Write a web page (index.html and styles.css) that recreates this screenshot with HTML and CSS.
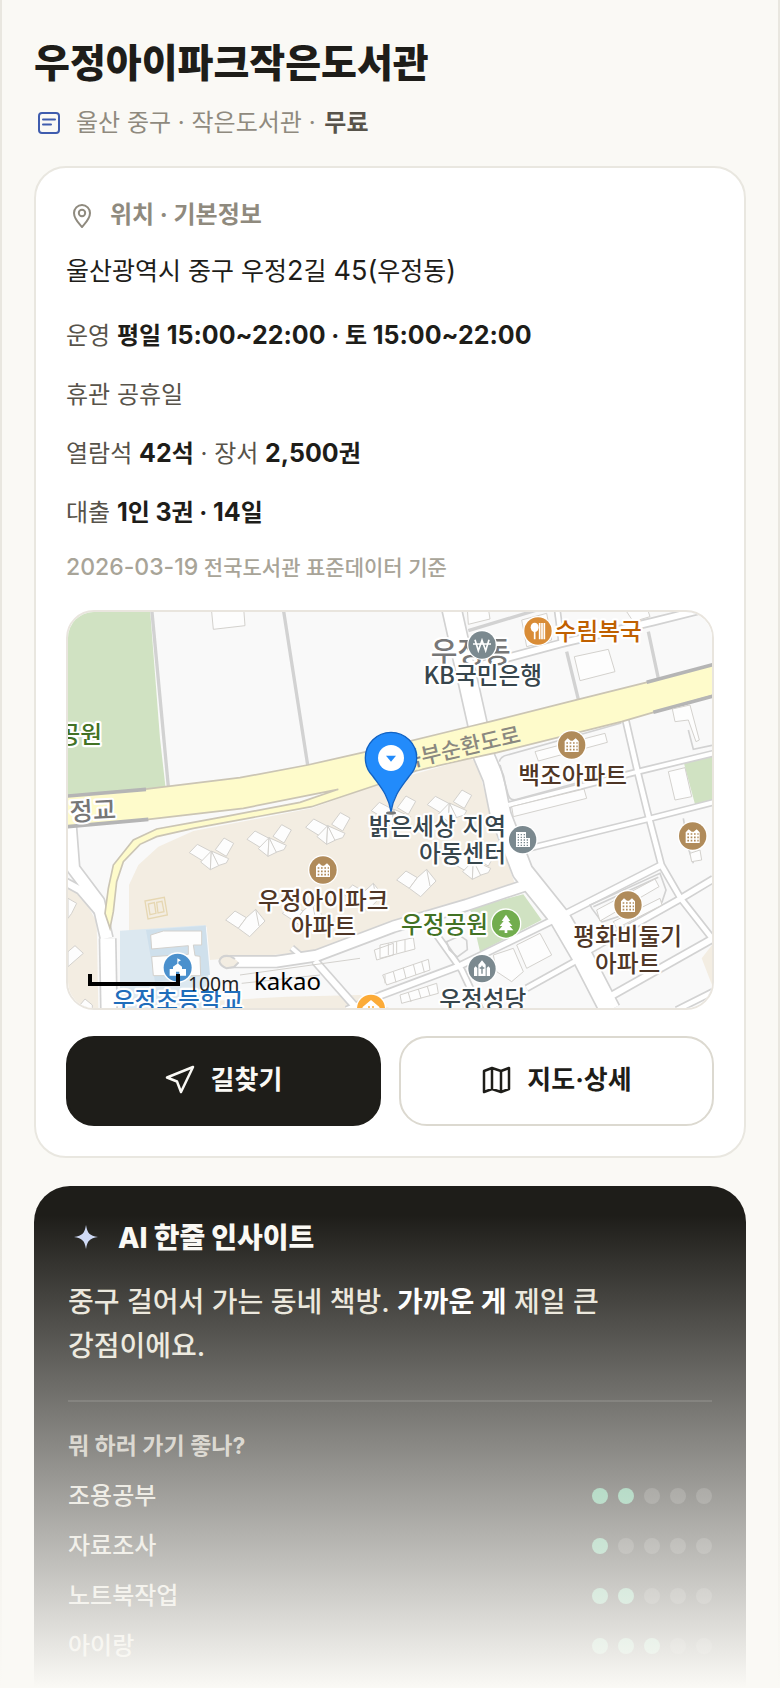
FILE: index.html
```html
<!DOCTYPE html>
<html lang="ko">
<head>
<meta charset="utf-8">
<meta name="viewport" content="width=device-width, initial-scale=1">
<title>우정아이파크작은도서관</title>
<link rel="stylesheet" href="styles.css">
</head>
<body>
<main class="page">
  <header class="head">
    <h1 class="title">우정아이파크작은도서관</h1>
    <p class="sub">
      <svg class="icon doc" viewBox="0 0 30 30" aria-hidden="true"><rect x="5" y="5" width="20" height="20" rx="3"/><path d="M9 11.500h12M9 16.500h8"/></svg>
      <span>울산 중구 · 작은도서관 · <b>무료</b></span>
    </p>
  </header>

  <section class="card">
    <h2 class="card-title">
      <svg class="icon" viewBox="0 0 30 30" aria-hidden="true"><path d="M16 27C13 23.500 8 19 8 13a8 8 0 0 1 16 0C24 19 19 23.500 16 27z"/><circle cx="16" cy="13" r="3.200"/></svg>
      위치 · 기본정보
    </h2>
    <p class="address">울산광역시 중구 우정<span class="num">2</span>길 <span class="num">45(</span>우정동<span class="num">)</span></p>
    <p class="row">운영 <b>평일 <span class="num">15:00~22:00</span> · 토 <span class="num">15:00~22:00</span></b></p>
    <p class="row">휴관 공휴일</p>
    <p class="row">열람석 <b><span class="num">42</span>석</b> · 장서 <b><span class="num">2,500</span>권</b></p>
    <p class="row">대출 <b><span class="num">1</span>인 <span class="num">3</span>권 · <span class="num">14</span>일</b></p>
    <p class="source"><span class="num">2026-03-19</span> 전국도서관 표준데이터 기준</p>

    <div class="map">
      <svg class="map-art" viewBox="24 21 1932 1188" preserveAspectRatio="xMidYMid slice" role="img" aria-label="우정아이파크작은도서관 주변 지도">
        <defs>
          <g id="apt"><path d="M-66-3-42-28 2-5-25 22z"/><path d="M38-47 67-31 45 8 12-12z"/><path d="M0-8-32 25-3 48z"/><path d="M0-8 52 15 45 28 20 36z"/><path d="M0-8 22 36-3 48z"/></g>
          <g id="block"><path d="M0 27 28 0 62 20 38 52z"/><path d="M62 20 90-5 118 30 72 77 38 52z"/><path d="M90-5 100 45"/></g>
          <g id="brown"><circle r="45" fill="#fff"/><circle r="41" fill="#b08b5a"/><path fill="#fff" d="M-21 21V-11L-12-20-3-13H3L12-20 21-11V21z"/><path stroke="#b08b5a" stroke-width="5" stroke-dasharray="5 5" d="M-16-6H18M-16 4H18M-16 14H18"/></g>
          <g id="roads">
            <path style="--w:54px" d="M1170-10 1262 400"/>
            <path style="--w:58px" d="M1262 430 1300 520 1322 630 1388 800 1500 940 1570 1060 1650 1215"/>
            <path style="--w:30px" d="M510 1070H650L770 1052 1000 965 1220 900 1400 840"/>
            <path style="--w:12px" d="M695 1028 730 1058"/>
            <path style="--w:18px" d="M765 1068 890 1210"/>
            <path style="--w:16px" d="M860 1215 960 1172 1200 1082 1480 945"/>
            <path style="--w:14px" d="M1130 990 1205 1095 1262 1215"/>
            <path style="--w:14px" d="M1697 345 1735 510 1762 620 1804 780 1862 880 1956 1000"/>
            <path style="--w:12px" d="M1345 600 1725 502 1960 445"/>
            <path style="--w:12px" d="M1400 732 1765 642 1960 592"/>
            <path style="--w:16px" d="M1510 930 1804 780"/>
            <path style="--w:16px" d="M1570 1045 1860 882 1960 822"/>
            <path style="--w:14px" d="M1400 1150 1570 1055"/>
            <path style="--w:18px" d="M1650 1175 1960 1000"/>
            <path style="--w:14px" d="M1850 1215 1960 1160"/>
            <path style="--w:18px" d="M1270 178 1500 116 1780 50 1960 5"/>
            <path style="--w:12px" d="M1490 0 1505 115"/>
            <path style="--w:34px" d="M30 660 40 790 115 890 140 1000"/>
            <path style="--w:20px" d="M10 828 60 855 115 920"/>
            <path style="--w:44px" d="M143 1000 147 1220"/>
          </g>
        </defs>
        <rect class="land" x="0" y="0" width="2000" height="1240"/>
        <path class="green" d="M0 0H269L300 400 318 560 0 580z"/>
        <path class="green" d="M1870 468 1960 446V588L1905 598z"/>
        <path class="beige" d="M955 538 755 610 400 678 295 725 235 780 207 840V980L440 965 450 1065 760 1040 1000 955 1210 885 1365 838 1290 620 1250 470 1230 460z"/>
        <path class="beige" d="M0 835 60 860 110 950 115 1210H0zM330 1195 680 1175 900 1170 990 1210H330zM1925 1060 1956 1020V1140z"/>
        <path class="school" d="M180 977 437 960 450 1210H180z"/>
        <path class="school-core" d="M258 975 437 962 450 1110 285 1130z"/>
        <path class="green" d="M1230 910 1390 868 1445 945 1260 1040z"/>
        <use href="#roads" class="road-edge"/>
        <use href="#roads" class="road-fill"/>
        <path class="loop" d="M525 1062 512 1054Q484 1048 478 1068 480 1082 500 1090L522 1086 536 1072"/>
        <path class="lane" d="M1160 1010l40-18 20 14 2 28-30 22-24-22zM1590 900l210-95 18 50-12 36-180 60-30-40zM1600 905l195-88M1885 375l15 58 56-12M1870 640l15 90 15 45M1320 480l24 88q6 22 30 14L1690 496M1318 470q4-16 24-20L1684 354"/>
        <path class="street" d="M274 0 325 545M668 0 743 480M1225 77 1480 0M1520 140 1555 283M1765 80 1795 220"/>

        <path class="avenue" d="M0 574 250 553 540 518 743 480 920 440 1235 363 1290 350 1555 283 1760 232 1970 176V268L1780 322 1685 350 1310 443 1230 460 1070 497 950 540 755 605 400 670 290 695 240 718 190 770 170 830 160 920 150 970 135 925 145 850 160 780 220 705 290 672 400 652 510 632 720 592 835 553 550 610 265 643 0 667z"/>
        <path class="bridge" d="M0 575 258 553M0 667 265 643M1760 232 1970 176M1780 322 1970 270"/>

        <g class="house">
          <path d="M454 10 460 73 555 62 551 10z"/>
          <path d="M1543 155 1645 133 1665 200 1560 227zM1425 440 1635 385 1642 412 1435 468zM1355 605 1572 552 1580 580 1360 635zM1825 500 1875 488 1895 575 1845 585zM1837 312 1890 300 1918 405 1908 410 1885 345 1845 350zM1385 45 1460 25 1475 105 1400 125zM1222 10H1285L1290 42 1225 58zM1700 20 1760 5 1770 35 1720 50z"/>
          <path d="M1610 915 1785 822 1797 845 1620 948zM1660 950 1800 880 1806 900 1670 970zM1370 1020 1440 985 1475 1050 1400 1090zM1300 1050 1360 1030 1390 1100 1355 1130 1310 1100zM1890 745 1920 735 1925 765 1895 770z"/>
          <path d="M960 1020 1060 998 1065 1032 960 1060zM968 1110 1105 1063 1110 1095 980 1140zM1020 1170 1130 1135 1135 1165 1025 1195zM943 1035 1000 1015V1050L950 1065zM975 1110V1135M985 1015v35M1010 1010v35M1035 1005v35M1000 1100l8 32M1030 1088l8 32M1060 1078l8 32M1085 1070l8 32M1045 1163l8 28M1075 1152l8 28M1102 1144l8 28"/>
          <path d="M24 880 50 895 35 925 24 940zM24 1040 45 1022 70 1045 24 1085zM60 1200 75 1182 97 1200V1215z"/>
          <path d="M272 990 310 978H425V1020H400L405 1052 420 1054 422 1112H280L275 1055 385 1048V1022L275 1032z"/>
          <path d="M540 1110 900 1060M545 1135 780 1110"/>
          <use href="#apt" x="454" y="746"/><use href="#apt" x="627" y="706"/><use href="#apt" x="803" y="670"/><use href="#apt" x="1000" y="620"/><use href="#apt" x="1168" y="602"/><use href="#apt" x="1240" y="775"/>
          <use href="#block" x="497" y="918"/><use href="#block" x="667" y="898"/><use href="#block" x="850" y="840"/><use href="#block" x="1010" y="798"/>
        </g>
        <path class="court" d="M255 888 313 877 322 930 264 942zM265 897 283 893 288 925 270 929zM290 892 306 889 312 920 294 924z"/>

        <g class="poi">
          <text class="area" x="1232" y="173" text-anchor="middle">우정동</text>
          <text class="bridge-name" x="30" y="648" transform="rotate(-3 30 648)">정교</text>
          <text class="road-name" x="1030" y="492" transform="rotate(-13 1030 492)">북부순환도로</text>
          <text class="t-food" x="1484" y="105">수림복국</text>
          <text class="t-slate" x="1268" y="237" text-anchor="middle">KB국민은행</text>
          <text class="t-park" x="126" y="414" text-anchor="end">공원</text>
          <text class="t-brown" x="1538" y="537" text-anchor="middle">백조아파트</text>
          <text class="t-slate" x="1338" y="690" text-anchor="end">밝은세상 지역</text>
          <text class="t-slate" x="1338" y="771" text-anchor="end">아동센터</text>
          <text class="t-brown" x="790" y="912" text-anchor="middle">우정아이파크</text>
          <text class="t-brown" x="790" y="990" text-anchor="middle">아파트</text>
          <text class="t-park" x="1284" y="983" text-anchor="end">우정공원</text>
          <text class="t-brown" x="1703" y="1020" text-anchor="middle">평화비둘기</text>
          <text class="t-brown" x="1703" y="1100" text-anchor="middle">아파트</text>
          <text class="t-slate" x="1268" y="1209" text-anchor="middle">우정성당</text>
          <text class="t-school" x="354" y="1211" text-anchor="middle">우정초등학교</text>
        </g>

        <use href="#brown" x="1535" y="420"/><use href="#brown" x="789" y="795"/><use href="#brown" x="1898" y="693"/><use href="#brown" x="1704" y="900"/>
        <g transform="translate(1434 78)"><circle r="45" fill="#fff"/><circle r="41" fill="#d98c36"/><ellipse cx="-10" cy="-11" rx="12" ry="14" fill="#fff"/><path stroke="#fff" stroke-width="5" d="M-10 0V25M5-24V25M12-24V25M19-24V25"/></g>
        <g transform="translate(1266 120)"><circle r="45" fill="#fff"/><circle r="41" fill="#7b898f"/><path fill="none" stroke="#fff" stroke-width="5" d="M-21-16-11 17 0-14 11 17 21-16M-27-3H27"/></g>
        <g transform="translate(1388 704)"><circle r="45" fill="#fff"/><circle r="41" fill="#7b898f"/><path fill="#fff" d="M-20 22V-23H10V-5H22V22z"/><path stroke="#7b898f" stroke-width="4" stroke-dasharray="4 5" d="M-15-15H8M-15-7H8M-15 1H18M-15 9H18M-15 17H18"/></g>
        <g transform="translate(1338 956)"><circle r="46" fill="#fff"/><circle r="42" fill="#72ad4e"/><path fill="#fff" d="M0-27 13-8H7L19 7H11L22 20H4V28H-4V20H-22L-11 7H-19L-7-8H-13z"/></g>
        <g transform="translate(1266 1091)"><circle r="45" fill="#fff"/><circle r="41" fill="#7b898f"/><path fill="#fff" d="M-11 22V-12L0-25 11-12V22zM-24 22V-2L-19-7-14-2V22zM14 22V-2L19-7 24-2V22z"/><path stroke="#7b898f" stroke-width="4" d="M0-9V15M-7-2H7"/></g>
        <g transform="translate(353 1088)"><circle r="46" fill="#fff"/><circle r="42" fill="#4a90cd"/><path fill="#fff" d="M-1-28 10-22 2-18V-12L13-3V4H25V24H5V12H-5V24H-24V4H-14V-3L-1-12z"/></g>
        <g transform="translate(933 1211)"><circle r="46" fill="#fff"/><circle r="42" fill="#fcab38"/><path fill="#fff" d="M0-26 26-4 18 6V20H-18V6L-26-4z"/><circle cx="-6" cy="-5" r="3" fill="#fcab38"/><circle cx="6" cy="-5" r="3" fill="#fcab38"/></g>

        <ellipse cx="993" cy="624" rx="15" ry="5" fill="#777"/>
        <path class="pin" d="M993 620C985 570 960 544 938 513A77 77 0 1 1 1048 513C1026 544 1001 570 993 620z"/>
        <circle cx="993" cy="459" r="39" fill="#fff"/>
        <path fill="#228bfb" d="M978 452H1008L993 470z"/>

        <path class="scale" d="M90 1107V1137H354V1107"/>
        <text class="scale-text" x="384" y="1157">100m</text>
        <text class="kakao" x="582" y="1155">kakao</text>
      </svg>
    </div>

    <div class="actions">
      <button class="btn btn-dark" type="button">
        <svg class="icon" viewBox="0 0 30 30" aria-hidden="true"><path d="M28 2 2 12.500 12 16.500 16 27z"/></svg>
        길찾기
      </button>
      <button class="btn" type="button">
        <svg class="icon" viewBox="0 0 30 30" aria-hidden="true"><path d="M3 6 11 3 20 6 28 3V24L20 27 11 24 3 27zM11 3V24M20 6V27"/></svg>
        지도·상세
      </button>
    </div>
  </section>

  <section class="insight">
    <h2 class="insight-title">
      <svg class="star" viewBox="0 0 36 36" aria-hidden="true"><path d="M18 5C19.500 13.500 21.500 15.500 30 17 21.500 18.500 19.500 20.500 18 29 16.500 20.500 14.500 18.500 6 17 14.500 15.500 16.500 13.500 18 5z"/></svg>
      AI 한줄 인사이트
    </h2>
    <p class="insight-text">중구 걸어서 가는 동네 책방. <b>가까운 게</b> 제일 큰 강점이에요.</p>
    <div class="scores">
      <h3 class="scores-title">뭐 하러 가기 좋나?</h3>
      <ul class="score-list">
        <li class="score">조용공부 <span class="dots" role="img" aria-label="5점 중 2점"><i class="on"></i><i class="on"></i><i></i><i></i><i></i></span></li>
        <li class="score">자료조사 <span class="dots" role="img" aria-label="5점 중 1점"><i class="on"></i><i></i><i></i><i></i><i></i></span></li>
        <li class="score">노트북작업 <span class="dots" role="img" aria-label="5점 중 2점"><i class="on"></i><i class="on"></i><i></i><i></i><i></i></span></li>
        <li class="score">아이랑 <span class="dots" role="img" aria-label="5점 중 3점"><i class="on"></i><i class="on"></i><i class="on"></i><i></i><i></i></span></li>
      </ul>
    </div>
  </section>
  <div class="fade"></div>
</main>
</body>
</html>
```

FILE: styles.css
```css
* { box-sizing: border-box; }

body {
  margin: 0;
  background: #faf9f5;
  color: #1e1d19;
  font-family: Inter, "Noto Sans CJK KR", sans-serif;
  font-size: 24px;
}

h1, h2, h3, p, ul { margin: 0; padding: 0; }
b { font-weight: 700; }

.page {
  position: relative;
  padding: 39px 32px 0;
  border: solid #e9e7e0;
  border-width: 0 2px;
}

.title { font-size: 39px; font-weight: 800; line-height: 48px; }

.sub {
  display: flex;
  align-items: center;
  gap: 12px;
  margin-top: 21px;
  line-height: 30px;
  color: #8f8a7e;
}
.sub b { margin-left: 2px; color: #57534a; }

.icon {
  flex: none;
  width: 30px;
  height: 30px;
  fill: none;
  stroke: currentColor;
  stroke-width: 2;
  stroke-linecap: round;
  stroke-linejoin: round;
}
.doc { color: #3f5cae; }

.card {
  margin-top: 28px;
  padding: 30px;
  background: #fff;
  border: 2px solid #e9e7e0;
  border-radius: 32px;
}
.card-title {
  display: flex;
  align-items: center;
  gap: 14px;
  font-size: 24px;
  font-weight: 700;
  line-height: 34px;
  color: #8f8a7e;
}
.address { margin: 19px 0 25px; font-size: 25px; line-height: 40px; }
.address .num { font-size: 27px; }
.row { margin-top: 19px; line-height: 40px; color: #57534a; }
.row b { color: #1e1d19; }
.row .num { font-size: 25px; }
.source { margin-top: 19px; font-size: 21px; line-height: 32px; color: #a8a498; }
.source .num { font-size: 23px; }
.num { line-height: 1; }

.map {
  height: 400px;
  margin-top: 26px;
  overflow: hidden;
  border: 2px solid #e9e5de;
  border-radius: 28px;
}
.map-art { display: block; width: 100%; height: 100%; }

.land { fill: #f9f9f9; }
.green { fill: #d0e2c2; }
.beige { fill: #f3ede2; }
.school { fill: #dce8f0; }
.school-core { fill: #cfe0ec; }
.road-edge, .road-fill { fill: none; stroke-linejoin: round; }
.road-edge { --casing: 10px; stroke: #d2d2d2; }
.road-fill { --casing: 0px; stroke: #fff; }
#roads path { stroke-width: calc(var(--w) + var(--casing)); }
.loop { fill: #f3ede2; stroke: #d2d2d2; stroke-width: 6; }
.lane { fill: none; stroke: #d2d2d2; stroke-width: 5; }
.street { fill: none; stroke: #d2d2d2; stroke-width: 10; }
.avenue { fill: #fefbcb; stroke: #cbc5b4; stroke-width: 5; }
.bridge { fill: none; stroke: #b5b5b5; stroke-width: 11; }
.house { fill: #fdfdfd; stroke: #d3d1cd; stroke-width: 3; }
.court { fill: none; stroke: #e6d7b2; stroke-width: 4; }

.poi text {
  font-family: "Noto Sans CJK KR", sans-serif;
  font-size: 71px;
  font-weight: 500;
  stroke: #fff;
  stroke-width: 13;
  stroke-linejoin: round;
  paint-order: stroke;
}
.poi .area { font-size: 87px; fill: #777; }
.poi .bridge-name { font-size: 76px; fill: #777; }
.poi .road-name { font-size: 66px; fill: #8a8880; stroke: #fefbcb; }
.t-food { fill: #c06000; }
.t-slate { fill: #37464d; }
.t-park { fill: #427224; }
.t-brown { fill: #4f3626; }
.t-school { fill: #1f6dbb; }

.pin { fill: #228bfb; stroke: #1262c2; stroke-width: 4; }
.scale { fill: none; stroke: #000; stroke-width: 12; }
.scale-text { font-family: "Noto Sans", sans-serif; font-size: 58px; fill: #222; }
.kakao { font-family: "Noto Sans", sans-serif; font-size: 72px; fill: #000; }

.actions {
  display: grid;
  grid-template-columns: 1fr 1fr;
  gap: 18px;
  margin-top: 26px;
}
.btn {
  display: flex;
  align-items: center;
  justify-content: center;
  gap: 16px;
  height: 90px;
  padding: 0 16px 2px;
  border: 2px solid #dcd9d0;
  border-radius: 28px;
  background: #fff;
  color: #1e1d19;
  font: inherit;
  font-size: 26px;
  font-weight: 700;
  line-height: 34px;
}
.btn .icon { stroke-width: 2.5; }
.btn-dark { border-color: #1e1d19; background: #1e1d19; color: #faf9f5; }

.insight {
  margin-top: 28px;
  padding: 34px 34px 24px;
  border-radius: 36px 36px 0 0;
  background: #1e1d19;
}
.insight-title {
  display: flex;
  align-items: center;
  gap: 14px;
  font-size: 28px;
  font-weight: 800;
  line-height: 36px;
  color: #faf9f5;
}
.star { flex: none; width: 36px; height: 36px; fill: #cdd8f5; }
.insight-text {
  margin-top: 24px;
  font-size: 28px;
  font-weight: 500;
  line-height: 44px;
  color: #e8e4d8;
  word-break: keep-all;
}
.insight-text b { color: #fff; }

.source { font-weight: 500; }

.scores {
  margin-top: 32px;
  padding-top: 28px;
  border-top: 2px solid rgba(255, 255, 255, .12);
}
.scores-title { font-size: 23px; font-weight: 700; line-height: 32px; color: #bfbab0; }
.score-list { display: grid; gap: 16px; margin-top: 17px; list-style: none; }
.score {
  display: flex;
  align-items: center;
  justify-content: space-between;
  line-height: 34px;
  font-weight: 500;
  color: #dedbd0;
}
.dots { display: flex; gap: 10px; }
.dots i { width: 16px; height: 16px; border-radius: 50%; background: rgba(255, 255, 255, .16); }
.dots .on { background: #5bb389; }

/* Covers the lower part of the page, over the insight card */
.fade {
  position: absolute;
  inset: auto -2px 0;
  height: 472px;
  background: linear-gradient(rgba(250, 249, 245, 0), #faf9f5);
  pointer-events: none;
}
```
